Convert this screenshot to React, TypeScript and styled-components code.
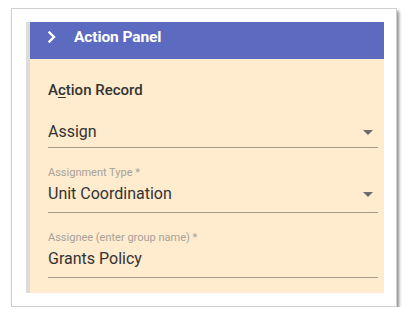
import styled, { createGlobalStyle } from "styled-components";

const GlobalStyle = createGlobalStyle`
  html, body {
    margin: 0;
    padding: 0;
    background: #ffffff;
    font-family: Roboto, "Liberation Sans", Arial, sans-serif;
  }
`;

type FieldProps = {
  label?: string;
  value: string;
  select?: boolean;
};

function Field({ label, value, select }: FieldProps) {
  return (
    <FieldBox $labeled={!!label}>
      {label && <Label>{label}</Label>}
      <ValueRow $labeled={!!label}>
        <Value>{value}</Value>
        {select && <Caret />}
      </ValueRow>
    </FieldBox>
  );
}

function App() {
  return (
    <>
      <GlobalStyle />
      <Card>
        <Panel>
          <Header>
            <svg width="8" height="12" viewBox="0 0 8 12">
              <path
                d="M1.5 1.5 L6 6 L1.5 10.5"
                fill="none"
                stroke="#ffffff"
                strokeWidth="2.4"
                strokeLinecap="square"
              />
            </svg>
            <HeaderTitle>Action Panel</HeaderTitle>
          </Header>
          <Body>
            <Title>
              A<u>c</u>tion Record
            </Title>
            <Field value="Assign" select />
            <Field label="Assignment Type *" value="Unit Coordination" select />
            <Field label="Assignee (enter group name) *" value="Grants Policy" />
          </Body>
        </Panel>
      </Card>
    </>
  );
}

const Card = styled.div`
  margin: 8px 0 0 11px;
  width: 386px;
  height: 299px;
  box-sizing: border-box;
  padding: 13px 12px 13px 14px;
  background: #ffffff;
  border: 1px solid #cfcfcf;
  box-shadow: 2px 3px 3px rgba(0, 0, 0, 0.45);
  display: flex;
`;

const Panel = styled.div`
  flex: 1;
  display: flex;
  flex-direction: column;
  border-left: 4px solid #dcdcdc;
`;

const Header = styled.div`
  height: 37px;
  box-sizing: border-box;
  padding: 0 0 7px 18px;
  background: #5c6bc0;
  display: flex;
  align-items: center;
  gap: 18px;
`;

const HeaderTitle = styled.span`
  color: #ffffff;
  font-size: 15.5px;
  font-weight: 700;
  letter-spacing: -0.1px;
`;

const Body = styled.div`
  flex: 1;
  background: #ffebcd;
  padding: 22px 6px 0 18px;
  display: flex;
  flex-direction: column;
`;

const Title = styled.div`
  font-size: 15px;
  line-height: 18px;
  font-weight: 500;
  color: #333333;
  margin-bottom: 23px;

  u {
    text-decoration-thickness: 1px;
    text-underline-offset: 2px;
  }
`;

const FieldBox = styled.div<{ $labeled: boolean }>`
  display: flex;
  flex-direction: column;
  gap: 4px;
  margin-top: ${(p) => (p.$labeled ? "18px" : "0")};
  border-bottom: 1px solid #a39a8b;
`;

const Label = styled.div`
  font-size: 11px;
  line-height: 14px;
  color: #a7a29a;
`;

const ValueRow = styled.div<{ $labeled: boolean }>`
  display: flex;
  align-items: center;
  justify-content: space-between;
  padding-bottom: ${(p) => (p.$labeled ? "8px" : "5px")};
`;

const Value = styled.span`
  font-size: 16px;
  line-height: 20px;
  color: #333333;
`;

const Caret = styled.span`
  width: 0;
  height: 0;
  margin-right: 5px;
  border-left: 5px solid transparent;
  border-right: 5px solid transparent;
  border-top: 5px solid #6b6b6b;
`;

export default App;
